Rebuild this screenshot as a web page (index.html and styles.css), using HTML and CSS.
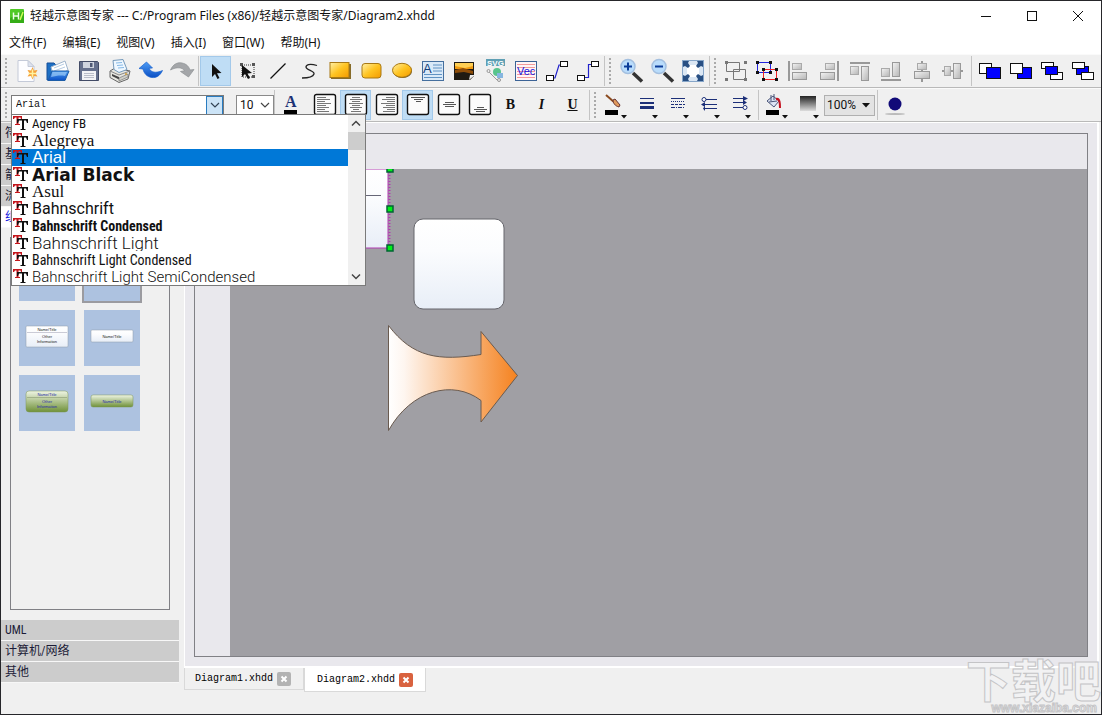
FILE: index.html
```html
<!DOCTYPE html>
<html lang="zh-CN">
<head>
<meta charset="utf-8">
<title>轻越示意图专家</title>
<link rel="stylesheet" href="styles.css">
</head>
<body>
<svg class="defs" aria-hidden="true">
  <defs>
    <linearGradient id="gold" x1="0" y1="0" x2="1" y2="1"><stop offset="0" stop-color="#fff0a8"/><stop offset=".5" stop-color="#ffc421"/><stop offset="1" stop-color="#f39a00"/></linearGradient>
    <linearGradient id="grey" x1="0" y1="0" x2="1" y2="1"><stop offset="0" stop-color="#f4f4f4"/><stop offset="1" stop-color="#b5b5b5"/></linearGradient>
    <linearGradient id="blue" x1="0" y1="0" x2="0" y2="1"><stop offset="0" stop-color="#4d9cf5"/><stop offset="1" stop-color="#0b4fc4"/></linearGradient>
    <linearGradient id="ice" x1="0" y1="0" x2="0" y2="1"><stop offset="0" stop-color="#fff"/><stop offset=".35" stop-color="#fbfcfe"/><stop offset="1" stop-color="#e8eef7"/></linearGradient>
    <linearGradient id="dark" x1="0" y1="0" x2="0" y2="1"><stop offset="0" stop-color="#222"/><stop offset="1" stop-color="#ddd"/></linearGradient>
    <linearGradient id="green" x1="0" y1="0" x2="0" y2="1"><stop offset="0" stop-color="#eff5e4"/><stop offset="1" stop-color="#6f9138"/></linearGradient>
    <linearGradient id="orange"><stop offset="0" stop-color="#fff"/><stop offset=".12" stop-color="#fef6f0"/><stop offset="1" stop-color="#f5821f"/></linearGradient>
    <symbol id="tt" viewBox="0 0 16 16"><path d="M1 1h9v3H9L8.500 2.500H6.500V9H8v1H3V9h1.500V2.500H3L2 4H1z" fill="#c4161c"/><path d="M5 4h11v4h-1l-1-2.500h-2V14h1.500v1H8.500v-1H10V5.500H7L6 8H5z" fill="#111"/></symbol>
    <symbol id="frame" viewBox="0 0 24 24"><rect x="1.500" y="1.500" width="21" height="20" rx="2" fill="#fbfbfb" stroke="#111" stroke-width="1.400"/></symbol>
    <symbol id="drop" viewBox="0 0 6 4"><path d="M0 0h6L3 3.500z" fill="#111"/></symbol>
    <symbol id="close" viewBox="0 0 14 14"><path d="M4.500 4.500l5 5m0-5l-5 5" stroke="#fff" stroke-width="2"/></symbol>
  </defs>
</svg>
<div class="window">
  <header class="titlebar">
    <svg class="logo" viewBox="0 0 14 14"><rect width="14" height="14" rx="1" fill="#4fc926"/><path d="M0 9L14 2V14H0z" fill="#35ad17"/><path d="M3.500 3.500v7M3.500 7h5M8.500 3.500v7" stroke="#efffe8" stroke-width="1.500"/><path d="M10 11l3-8" stroke="#cf5" stroke-width="1.500"/></svg>
    <h1 class="title">轻越示意图专家 --- C:/Program Files (x86)/轻越示意图专家/Diagram2.xhdd</h1>
    <div class="winbtns">
      <button aria-label="最小化"><svg viewBox="0 0 12 12"><path d="M1 6.500h10"/></svg></button>
      <button aria-label="最大化"><svg viewBox="0 0 12 12"><rect x="1.500" y="1.500" width="9" height="9"/></svg></button>
      <button aria-label="关闭"><svg viewBox="0 0 12 12"><path d="M1 1l10 10M11 1L1 11"/></svg></button>
    </div>
  </header>
  <nav class="menubar">
    <button>文件(F)</button><button>编辑(E)</button><button>视图(V)</button><button>插入(I)</button><button>窗口(W)</button><button>帮助(H)</button>
  </nav>

  <div class="toolbar" role="toolbar" aria-label="工具">
    <span class="grip"></span>
    <button class="tool" aria-label="新建"><svg viewBox="0 0 24 24"><path d="M3 1.500h10l6 6V22.500H3z" fill="#fdfdff" stroke="#c4cad8"/><path d="M13 1.500V7.500h6z" fill="#dde2ee" stroke="#c4cad8"/><path d="M17.500 8l1.500 3.500 3.500-.5-2 3.500 2 3-3.500-.5-1.500 3.500-1.500-3.500-3.500.5 2-3-2-3.500 3.500.5z" fill="#f5a13a"/><path d="M17.500 10.500v8M13.500 14.500h8" stroke="#fff3a0" stroke-width="1.500"/></svg></button>
    <button class="tool" aria-label="打开"><svg viewBox="0 0 24 24"><path d="M1 4h7l2 2h9v15H1z" fill="#1d6fc4" stroke="#164f98"/><path d="M5 8l14-6 3 9-14 8z" fill="#fff" stroke="#9fb4cc"/><path d="M8 9l10-4M8 12l11-4" stroke="#b6cbe2"/><path d="M2 21.500L6 12h17l-4 9.500z" fill="url(#blue)" stroke="#1c5da8"/><path d="M6.500 13H21l-2 4c-5-1-9 0-14 1z" fill="#9ccbf5" opacity=".7"/></svg></button>
    <button class="tool" aria-label="保存"><svg viewBox="0 0 24 24"><path d="M2.500 2.500h18l1 1v18h-19z" fill="#65708d" stroke="#424b66"/><rect x="6" y="3" width="11" height="6" fill="#cfd4df"/><rect x="13" y="4" width="2.500" height="4" fill="#4f5975"/><rect x="5" y="12" width="14" height="9" fill="#f2f3f6"/><path d="M7 14.500h10M7 16.500h10M7 18.500h10" stroke="#b9bdc9"/></svg></button>
    <button class="tool" aria-label="打印"><svg viewBox="0 0 24 24"><path d="M2 12l5-3 15 3-2 8-9 3.500-9-5z" fill="#e6e6e0" stroke="#666"/><path d="M2 12l9 4 11-4" fill="none" stroke="#888"/><path d="M5 1.500l10-1 4 10-8 3-5-3z" fill="#eef7ff" stroke="#7599bb"/><path d="M8 4l6-.5M9 6.500l6-.5M10 9l6-.5" stroke="#86b9e6"/><path d="M4 15v2l7 3.500v-2.500z" fill="#444"/><path d="M11 19l9-4v3l-9 4z" fill="#cfcfc8" stroke="#777" stroke-width=".7"/><circle cx="18" cy="15" r="1" fill="#c93"/></svg></button>
    <button class="tool" aria-label="撤销"><svg viewBox="0 0 24 24"><path d="M0 9.500L7.500 3l6 6-3.500.3c2 4.200 7 5.200 13.500 2.200C21 17 17 19 13 18.500 8 18 5 14.500 4 10z" fill="url(#blue)" stroke="#1660cf" stroke-width=".7"/></svg></button>
    <button class="tool" aria-label="重做"><svg viewBox="0 0 24 24"><path d="M24 10.500L18.500 18l-8-5.500 4-.8C12.500 8.500 7 7.500.5 11 3 5.500 7 3 12 4c5 1 7 4 8 7z" fill="#a4a6a9" stroke="#8d9093" stroke-width=".7"/></svg></button>
    <span class="sep"></span>
    <button class="tool on" aria-label="选择"><svg viewBox="0 0 24 24"><path d="M8 5v13l3-3 2.500 5 2-1-2.500-4.800 4.500-.2z" fill="#111"/></svg></button>
    <button class="tool" aria-label="编辑点"><svg viewBox="0 0 24 24"><path d="M7 6h12v12H7z" fill="none" stroke="#333" stroke-dasharray="1 1"/><path d="M5 4h3v3H5zM17 4h3v3h-3zM17 16h3v3h-3z" fill="#555"/><path d="M7 6v12l3-3 3 5 2-1-2.500-4.500 4.500-.5z" fill="#111"/></svg></button>
    <button class="tool" aria-label="直线"><svg viewBox="0 0 24 24"><path d="M4.500 19.500l15-15" stroke="#111" stroke-width="1.200"/></svg></button>
    <button class="tool" aria-label="曲线"><svg viewBox="0 0 24 24"><path d="M20 6.500C12 4 9 6 9 8c0 3 9 4 8 7s-7 4-12 4" fill="none" stroke="#222" stroke-width="1.300"/></svg></button>
    <button class="tool" aria-label="矩形"><svg viewBox="0 0 24 24"><path d="M3 5h20v15H3z" fill="#876c2a"/><rect x="2" y="3.500" width="19" height="15" fill="url(#gold)" stroke="#a87814"/></svg></button>
    <button class="tool" aria-label="圆角矩形"><svg viewBox="0 0 24 24"><rect x="3" y="4.500" width="19" height="14.500" rx="3" fill="url(#gold)" stroke="#a87814"/></svg></button>
    <button class="tool" aria-label="椭圆"><svg viewBox="0 0 24 24"><ellipse cx="12.500" cy="12" rx="9.500" ry="7" fill="#665326"/><ellipse cx="12" cy="11.300" rx="9.500" ry="7" fill="url(#gold)" stroke="#a87814"/></svg></button>
    <button class="tool" aria-label="文本"><svg viewBox="0 0 24 24"><rect x="1.500" y="2.500" width="21" height="19" fill="#d9e9f8" stroke="#456f9e"/><path d="M12 6h9M12 9h9M12 12h9M3 15.500h18M3 18.500h18" stroke="#5f92c3"/><text class="glyph-a" x="2" y="14">A</text></svg></button>
    <button class="tool" aria-label="图片"><svg viewBox="0 0 24 24"><path d="M2 3h20v14l-4 4H2z" fill="#1f1a12"/><path d="M3 4h18v6H3z" fill="#f09a12"/><path d="M3 4h18v3l-8 2-10-2z" fill="#ffcf54"/><path d="M3 11l8-2 10 3v3l-9-2-9 1z" fill="#8e4d08"/><path d="M17 21l1-5 5 0z" fill="#eee"/></svg></button>
    <button class="tool" aria-label="SVG"><svg viewBox="0 0 24 24"><rect x="3" y="0" width="19" height="7" fill="#5f9fb4"/><text class="glyph-svg" x="4" y="6.500">SVG</text><circle cx="14" cy="13" r="4" fill="#58c48c"/><rect x="14" y="14" width="6" height="5" fill="#86b6e0"/><path d="M5 12l9 9 4 0" fill="none" stroke="#999"/><circle cx="5.500" cy="12" r="1.500" fill="#eee" stroke="#999"/><circle cx="16" cy="21" r="1.500" fill="#eee" stroke="#999"/></svg></button>
    <button class="tool" aria-label="矢量"><svg viewBox="0 0 24 24"><rect x="1.500" y="2.500" width="21" height="19" fill="#fff5f5" stroke="#3c6396"/><path d="M3 5.500h18M3 8.500h18M3 12.500h18M3 15.500h18M3 18.500h18" stroke="#f29a9a"/><text class="glyph-vec" x="3" y="16">Vec</text></svg></button>
    <button class="tool" aria-label="连线"><svg viewBox="0 0 24 24"><path d="M9 19h1l4-13h2" fill="none" stroke="#22c" stroke-width="1.200"/><rect x="1.500" y="16.500" width="7" height="5" fill="#fff" stroke="#111"/><rect x="15.500" y="2.500" width="7" height="5" fill="#fff" stroke="#111"/></svg></button>
    <button class="tool" aria-label="折线"><svg viewBox="0 0 24 24"><path d="M8 18.500h4.500v-13H16" fill="none" stroke="#22c" stroke-width="1.200"/><rect x="1.500" y="16.500" width="7" height="5" fill="#fff" stroke="#111"/><rect x="15.500" y="2.500" width="7" height="5" fill="#fff" stroke="#111"/></svg></button>
    <span class="sep"></span><span class="grip"></span>
    <button class="tool" aria-label="放大"><svg viewBox="0 0 24 24"><path d="M14 14l9 8.500" stroke="#333" stroke-width="3.500"/><circle cx="9" cy="7.500" r="7" fill="#b9dcfb" stroke="#a3bfdf" stroke-width="1.500"/><path d="M5 7.500h8M9 3.500v8" stroke="#0b3c99" stroke-width="2"/></svg></button>
    <button class="tool" aria-label="缩小"><svg viewBox="0 0 24 24"><path d="M14 14l9 8.500" stroke="#333" stroke-width="3.500"/><circle cx="9" cy="7.500" r="7" fill="#b9dcfb" stroke="#a3bfdf" stroke-width="1.500"/><path d="M5 7.500h8" stroke="#0b3c99" stroke-width="2"/></svg></button>
    <button class="tool" aria-label="适应窗口"><svg viewBox="0 0 24 24"><rect x="1" y="1" width="22" height="22" fill="#86a5c8"/><rect x="2" y="2" width="20" height="20" fill="#dbe7f4"/><rect x="6" y="6" width="12" height="12" rx="3" fill="#fff"/><path d="M2 2h6L7 4l2 3-2 2-3-2-2 1zM22 2h-6l1 2-2 3 2 2 3-2 2 1zM2 22h6l-1-2 2-3-2-2-3 2-2-1zM22 22h-6l1-2-2-3 2-2 3 2 2-1z" fill="#284f83"/></svg></button>
    <span class="sep"></span><span class="grip"></span>
    <button class="tool" aria-label="组合"><svg viewBox="0 0 24 24"><path d="M2.500 3.500h13v9h-13zM9.500 10.500h12v10h-12z" fill="none" stroke="#777"/><path d="M1 2h3v3H1zM20 2h3v3h-3zM1 19h3v3H1zM20 19h3v3h-3z" fill="#777"/></svg></button>
    <button class="tool" aria-label="取消组合"><svg viewBox="0 0 24 24"><path d="M2.500 3.500h13v10h-13z" fill="none" stroke="#22d"/><path d="M8.500 10.500h13v10h-13z" fill="none" stroke="#e22"/><path d="M1 2h3v3H1zM14 2h3v3h-3zM1 12h3v3H1zM14 12h3v3h-3zM7 9h3v3H7zM20 9h3v3h-3zM7 19h3v3H7zM20 19h3v3h-3z" fill="#111"/></svg></button>
    <button class="tool" aria-label="左对齐"><svg viewBox="0 0 24 24"><path d="M3 2v20" stroke="#999" stroke-width="2"/><rect x="6.500" y="4.500" width="9" height="6" fill="url(#grey)" stroke="#aaa"/><rect x="6.500" y="13.500" width="14" height="7" fill="url(#grey)" stroke="#999"/></svg></button>
    <button class="tool" aria-label="右对齐"><svg viewBox="0 0 24 24"><path d="M21 2v20" stroke="#999" stroke-width="2"/><rect x="8.500" y="4.500" width="9" height="6" fill="url(#grey)" stroke="#aaa"/><rect x="3.500" y="13.500" width="14" height="7" fill="url(#grey)" stroke="#999"/></svg></button>
    <button class="tool" aria-label="顶端对齐"><svg viewBox="0 0 24 24"><path d="M2 4h20" stroke="#999" stroke-width="2"/><rect x="2.500" y="7.500" width="8" height="8" fill="url(#grey)" stroke="#aaa"/><rect x="13.500" y="7.500" width="7" height="14" fill="url(#grey)" stroke="#999"/></svg></button>
    <button class="tool" aria-label="底端对齐"><svg viewBox="0 0 24 24"><path d="M2 21h20" stroke="#999" stroke-width="2"/><rect x="2.500" y="9.500" width="8" height="8" fill="url(#grey)" stroke="#aaa"/><rect x="13.500" y="3.500" width="7" height="14" fill="url(#grey)" stroke="#999"/></svg></button>
    <button class="tool" aria-label="水平居中"><svg viewBox="0 0 24 24"><path d="M12 2v21" stroke="#999" stroke-width="2"/><rect x="7.500" y="4.500" width="9" height="6" fill="url(#grey)" stroke="#aaa"/><rect x="4.500" y="12.500" width="15" height="7" fill="url(#grey)" stroke="#999"/></svg></button>
    <button class="tool" aria-label="垂直居中"><svg viewBox="0 0 24 24"><path d="M1 12h21" stroke="#999" stroke-width="2"/><rect x="3.500" y="7.500" width="6" height="9" fill="url(#grey)" stroke="#aaa"/><rect x="12.500" y="4.500" width="7" height="15" fill="url(#grey)" stroke="#999"/></svg></button>
    <span class="sep wide"></span>
    <button class="tool" aria-label="置于顶层"><svg viewBox="0 0 24 24"><rect x="1.500" y="4.500" width="12" height="10" fill="#fff" stroke="#111"/><rect x="8.500" y="8.500" width="14" height="11" fill="#00f" stroke="#111"/></svg></button>
    <button class="tool" aria-label="置于底层"><svg viewBox="0 0 24 24"><rect x="8.500" y="8.500" width="14" height="11" fill="#00f" stroke="#111"/><rect x="1.500" y="4.500" width="12" height="10" fill="#fff" stroke="#111"/></svg></button>
    <button class="tool" aria-label="上移一层"><svg viewBox="0 0 24 24"><rect x="1.500" y="3.500" width="12" height="6" fill="#fff" stroke="#111"/><rect x="10.500" y="13.500" width="12" height="7" fill="#fff" stroke="#111"/><rect x="5.500" y="7.500" width="12" height="8" fill="#00f" stroke="#111"/></svg></button>
    <button class="tool" aria-label="下移一层"><svg viewBox="0 0 24 24"><rect x="5.500" y="7.500" width="12" height="8" fill="#00f" stroke="#111"/><rect x="1.500" y="3.500" width="12" height="6" fill="#fff" stroke="#111"/><rect x="10.500" y="13.500" width="12" height="7" fill="#fff" stroke="#111"/></svg></button>
  </div>

  <div class="toolbar" role="toolbar" aria-label="格式">
    <span class="grip"></span>
    <div class="combo">
      <input class="font-input" type="text" value="Arial" aria-label="字体">
      <button class="combo-open" aria-label="打开字体列表"><svg viewBox="0 0 10 10"><path d="M1 3l4 4 4-4" fill="none" stroke="#345" stroke-width="1.200"/></svg></button>
      <div class="popup">
        <ul class="fonts" role="listbox" aria-label="字体列表">
          <li class="agency" role="option"><svg><use href="#tt"/></svg>Agency FB</li>
          <li class="serif" role="option"><svg><use href="#tt"/></svg>Alegreya</li>
          <li class="arial picked" role="option" aria-selected="true"><svg><use href="#tt"/></svg>Arial</li>
          <li class="black" role="option"><svg><use href="#tt"/></svg>Arial Black</li>
          <li class="serif" role="option"><svg><use href="#tt"/></svg>Asul</li>
          <li class="din" role="option"><svg><use href="#tt"/></svg>Bahnschrift</li>
          <li class="narrow strong" role="option"><svg><use href="#tt"/></svg>Bahnschrift Condensed</li>
          <li class="din light" role="option"><svg><use href="#tt"/></svg>Bahnschrift Light</li>
          <li class="narrow" role="option"><svg><use href="#tt"/></svg>Bahnschrift Light Condensed</li>
          <li class="din semi" role="option"><svg><use href="#tt"/></svg>Bahnschrift Light SemiCondensed</li>
        </ul>
        <div class="scroll" aria-hidden="true">
          <svg viewBox="0 0 10 10"><path d="M1 7l4-4 4 4"/></svg><span class="thumb"></span><svg viewBox="0 0 10 10"><path d="M1 3l4 4 4-4"/></svg>
        </div>
      </div>
    </div>
    <div class="select size"><select aria-label="字号"><option>10</option></select><svg viewBox="0 0 10 10"><path d="M1 3l4 4 4-4" fill="none" stroke="#444" stroke-width="1.200"/></svg></div>
    <span class="sep tight"></span>
    <button class="tool" aria-label="字体颜色"><svg viewBox="0 0 24 24"><text class="glyph-color" x="6" y="14">A</text><rect x="5" y="17" width="13" height="5" fill="#000"/></svg></button>
    <span class="gap"></span>
    <button class="tool" aria-label="文本左对齐"><svg viewBox="0 0 24 24"><use href="#frame"/><path d="M4 4.500h9M4 6.500h13M4 8.500h8M4 10.500h14M4 12.500h9M4 14.500h12M4 16.500h8M4 18.500h12" stroke="#777"/></svg></button>
    <button class="tool on" aria-label="文本居中"><svg viewBox="0 0 24 24"><use href="#frame"/><path d="M8 4.500h8M6 6.500h12M8 8.500h8M5 10.500h14M8 12.500h8M6 14.500h12M9 16.500h6M7 18.500h10" stroke="#777"/></svg></button>
    <button class="tool" aria-label="文本右对齐"><svg viewBox="0 0 24 24"><use href="#frame"/><path d="M11 4.500h9M7 6.500h13M12 8.500h8M6 10.500h14M11 12.500h9M8 14.500h12M12 16.500h8M8 18.500h12" stroke="#777"/></svg></button>
    <button class="tool on" aria-label="文本靠上"><svg viewBox="0 0 24 24"><use href="#frame"/><path d="M5 4.500h14M8 6.500h9M10 8.500h5" stroke="#555"/></svg></button>
    <button class="tool" aria-label="文本居中垂直"><svg viewBox="0 0 24 24"><use href="#frame"/><path d="M8 9.500h9M6 11.500h13M8 13.500h9" stroke="#555"/></svg></button>
    <button class="tool" aria-label="文本靠下"><svg viewBox="0 0 24 24"><use href="#frame"/><path d="M9 14.500h7M6 16.500h13M8 18.500h9" stroke="#555"/></svg></button>
    <button class="tool letter">B</button>
    <button class="tool letter ital">I</button>
    <button class="tool letter under">U</button>
    <span class="sep"></span><span class="grip"></span>
    <button class="tool" aria-label="线条颜色"><svg viewBox="0 0 24 24"><path d="M2 2l8 7" stroke="#8b4a1e" stroke-width="2"/><path d="M9 7l2-1 5 6-1 2c-4-1-6-4-6-7z" fill="#e09a5c" stroke="#633"/><rect x="1" y="17" width="13" height="5" fill="#000"/></svg><svg class="drop"><use href="#drop"/></svg></button>
    <button class="tool" aria-label="线宽"><svg viewBox="0 0 24 24"><path d="M5 5.500h14" stroke="#1c2f78"/><path d="M5 10h14" stroke="#1c2f78" stroke-width="2"/><path d="M5 14.500h14" stroke="#1c2f78" stroke-width="3"/></svg><svg class="drop"><use href="#drop"/></svg></button>
    <button class="tool" aria-label="线型"><svg viewBox="0 0 24 24"><path d="M5 5.500h14" stroke="#1c2f78"/><path d="M5 8.500h14" stroke="#1c2f78" stroke-dasharray="1 1"/><path d="M5 11.500h14" stroke="#1c2f78" stroke-dasharray="3 1"/><path d="M5 14.500h14" stroke="#1c2f78" stroke-dasharray="4 1 1 1"/></svg><svg class="drop"><use href="#drop"/></svg></button>
    <button class="tool" aria-label="起点样式"><svg viewBox="0 0 24 24"><path d="M8 6.500h12M5 11.500h15M8 15.500h12" stroke="#1c2f78"/><circle cx="7" cy="6.500" r="2" fill="#fff" stroke="#1c2f78"/><path d="M8 9v5l-4-2.500z" fill="#1c2f78"/><path d="M8 13v5l-2-2.500z" fill="#1c2f78"/></svg><svg class="drop"><use href="#drop"/></svg></button>
    <button class="tool" aria-label="终点样式"><svg viewBox="0 0 24 24"><path d="M5 5.500h12M5 9.500h12M5 14.500h11" stroke="#1c2f78"/><path d="M15 3v5l5-2.500zM15 7v5l4-2.500z" fill="#1c2f78"/><circle cx="17" cy="14.500" r="2" fill="#fff" stroke="#1c2f78"/></svg><svg class="drop"><use href="#drop"/></svg></button>
    <span class="sep wide"></span>
    <button class="tool" aria-label="填充颜色"><svg viewBox="0 0 24 24"><path d="M2 8l6-5 6 5-5 6z" fill="#dde4f3" stroke="#4a5579"/><path d="M4 9l8-1M6 2v6M9 1v6" stroke="#4a5579"/><path d="M11 6c4-1 4 5 4 9" fill="none" stroke="#c4121f" stroke-width="2"/><rect x="1" y="17" width="13" height="5" fill="#000"/></svg><svg class="drop"><use href="#drop"/></svg></button>
    <button class="tool" aria-label="渐变"><svg viewBox="0 0 24 24"><rect x="4" y="3" width="16" height="15" fill="url(#dark)"/></svg><svg class="drop"><use href="#drop"/></svg></button>
    <div class="select zoom"><select aria-label="缩放"><option>100%</option></select><svg viewBox="0 0 10 10"><path d="M1 3h8L5 7.500z" fill="#111"/></svg></div>
    <span class="sep"></span>
    <button class="tool" aria-label="阴影"><svg viewBox="0 0 24 24"><circle cx="12" cy="11" r="6.500" fill="#110a78"/><ellipse cx="12" cy="21" rx="10" ry="1" fill="#bbb"/></svg></button>
  </div>

  <div class="body">
    <aside class="side">
      <button class="section">符号</button>
      <button class="section">基本图形</button>
      <button class="section">箭头</button>
      <button class="section">流程图</button>
      <button class="section active">组织结构图</button>
      <div class="palette">
        <button class="shape" aria-label="形状"></button>
        <button class="shape selected" aria-label="形状"></button>
        <button class="shape" aria-label="标题与信息"><svg viewBox="0 0 56 56"><rect x="7" y="16" width="42" height="21" rx="1" fill="url(#ice)" stroke="#8c9aa8" stroke-width=".5"/><path d="M8 22.500h40" stroke="#aab" stroke-width=".6"/><text x="28" y="20.500">Name/Title</text><text x="28" y="28">Other</text><text x="28" y="33">Information</text></svg></button>
        <button class="shape" aria-label="标题"><svg viewBox="0 0 56 56"><rect x="7" y="20" width="42" height="12" rx="1" fill="url(#ice)" stroke="#8c9aa8" stroke-width=".5"/><text x="28" y="27.500">Name/Title</text></svg></button>
        <button class="shape ink" aria-label="绿色标题与信息"><svg viewBox="0 0 56 56"><rect x="7" y="16" width="42" height="21" rx="3" fill="url(#green)" stroke="#7c9658" stroke-width=".5"/><path d="M8 22.500h40" stroke="#8a9a70" stroke-width=".6"/><text x="28" y="20.500">Name/Title</text><text x="28" y="28">Other</text><text x="28" y="33">Information</text></svg></button>
        <button class="shape ink" aria-label="绿色标题"><svg viewBox="0 0 56 56"><rect x="7" y="20" width="42" height="12" rx="2" fill="url(#green)" stroke="#7c9658" stroke-width=".5"/><text x="28" y="27.500">Name/Title</text></svg></button>
      </div>
      <button class="section">UML</button>
      <button class="section">计算机/网络</button>
      <button class="section">其他</button>
    </aside>
    <main class="main">
      <div class="board">
        <div class="view">
          <svg class="canvas" aria-label="示意图">
            <rect x="80" y="0" width="78" height="79" fill="url(#ice)" stroke="#b03ab0"/>
            <path d="M88 26.500h63" stroke="#667"/>
            <path d="M159.500 0v79" stroke="#b03ab0" stroke-width="2" stroke-dasharray="1 2"/>
            <g fill="#00f018" stroke="#063" stroke-width="1.500"><rect x="157" y="-3" width="6" height="6"/><rect x="157" y="37" width="6" height="6"/><rect x="157" y="76" width="6" height="6"/></g>
            <rect x="184" y="50" width="90" height="90" rx="9" fill="url(#ice)" stroke="#66666c"/>
            <path d="M158.500 156.500C183 189 209 192 251 185.500V162.500L287.500 206.500 251 253V231.500C223 210 181 221 158.500 261.500z" fill="url(#orange)" stroke="#6a5b50"/>
          </svg>
        </div>
      </div>
      <div class="tabs">
        <div class="tab"><button class="tab-name">Diagram1.xhdd</button><button class="tab-close" aria-label="关闭 Diagram1"><svg><use href="#close"/></svg></button></div>
        <div class="tab current"><button class="tab-name">Diagram2.xhdd</button><button class="tab-close" aria-label="关闭 Diagram2"><svg><use href="#close"/></svg></button></div>
      </div>
    </main>
  </div>
  <div class="watermark"><span class="mark">下载吧</span><span class="site">www.xiazaiba.com</span></div>
</div>
</body>
</html>
```

FILE: styles.css
```css
* { box-sizing: border-box; }
body { margin: 0; font: 12px/16px "Noto Sans", "Noto Sans CJK SC", sans-serif; color: #111; }
button, input, select { font: inherit; color: inherit; margin: 0; padding: 0; border: 0; background: none; border-radius: 0; }
svg { display: block; }
.defs { position: absolute; width: 0; height: 0; }
.window { position: relative; display: flex; flex-direction: column; height: 100vh; border: 1px solid #26262a; background: #f0f0f0; overflow: hidden; }

.titlebar { display: flex; align-items: center; flex: none; height: 30px; padding-left: 9px; background: #fff; }
.logo { width: 14px; height: 14px; margin-right: 6px; }
.title { flex: 1; margin: 0; font-size: 12px; font-weight: 400; white-space: nowrap; }
.winbtns { display: flex; }
.winbtns button { display: grid; place-items: center; width: 46px; height: 29px; }
.winbtns svg { width: 12px; height: 12px; fill: none; stroke: #111; }
.menubar { display: flex; flex: none; gap: 16px; height: 23px; padding-left: 8px; background: #fff; }

.toolbar { display: flex; align-items: center; flex: none; height: 34px; border-bottom: 1px solid #b9b9b9; border-top: 1px solid #fafafa; }
.tool { position: relative; display: grid; place-items: center; flex: none; width: 31px; height: 30px; }
.tool > svg { width: 24px; height: 24px; overflow: visible; }
.tool > .drop { position: absolute; right: 4px; bottom: 1px; width: 6px; height: 4px; }
.on { background: #bfddf5; border: 1px solid #a3c9ea; }
.grip { flex: none; width: 4px; height: 27px; margin: 0 2px 0 3px; background: radial-gradient(circle at 1px 1px, #aaa 1px, transparent 1px) 0 0 / 4px 4px; }
.grip:first-child { margin-left: 4px; }
.sep { flex: none; width: 1px; height: 30px; margin: 0 1px; background: #c4c4c4; }
.wide { margin: 0 2px 0 3px; }
.tight { margin: 0; }
.gap { flex: none; width: 3px; }
.letter { font: 700 14px/30px "Liberation Serif", serif; }
.ital { font-style: italic; }
.under { text-decoration: underline; }
.glyph-a { font: 13px "Liberation Sans", sans-serif; fill: #123f7a; }
.glyph-svg { font: 700 8px "Liberation Sans", sans-serif; fill: #fff; }
.glyph-vec { font: 11px "Liberation Sans", sans-serif; fill: #1414dd; }
.glyph-color { font: 700 16px "Liberation Serif", serif; fill: #1d3276; }

.combo { position: relative; display: flex; flex: none; width: 213px; height: 21px; border: 1px solid #7a7a7a; background: #fff; }
.font-input { flex: 1; min-width: 0; padding-left: 4px; font: 10px/18px "Liberation Mono", monospace; outline: 0; }
.combo-open { display: grid; place-items: center; width: 17px; background: #cce4f7; border: 1px solid #2a7cc0; }
.combo-open svg { width: 10px; height: 10px; }
.popup { position: absolute; z-index: 5; left: -1px; top: 18px; display: flex; width: 355px; height: 172px; border: 1px solid #7a7a7a; background: #fff; }
.fonts { flex: 1; margin: 0; padding: 0; list-style: none; }
.fonts li { display: flex; gap: 4px; height: 17px; overflow: hidden; font-size: 16px; line-height: 18px; white-space: nowrap; }
.fonts svg { flex: none; width: 16px; height: 16px; }
.fonts .agency, .fonts .narrow { font-family: "Roboto Condensed", "Liberation Sans", sans-serif; font-size: 14px; }
.fonts .agency { font-size: 13px; }
.fonts .strong { font-weight: 700; }
.fonts .serif { font-family: "Liberation Serif", serif; font-size: 17px; }
.fonts .arial { font-family: "Liberation Sans", sans-serif; font-size: 17px; }
.fonts .black { font-family: "DejaVu Sans", sans-serif; font-weight: 700; font-size: 17px; }
.fonts .din { font-family: Roboto, sans-serif; }
.fonts .light { font-size: 17px; font-weight: 300; }
.fonts .semi { font-size: 15px; font-weight: 300; }
.fonts .picked { background: #0078d7; color: #fff; }
.scroll { display: flex; flex-direction: column; width: 17px; background: #f0f0f0; }
.scroll svg { width: 10px; height: 17px; margin: 0 3px; fill: none; stroke: #444; stroke-width: 1.5; }
.scroll .thumb { height: 18px; margin-bottom: auto; background: #cdcdcd; }
.select { display: flex; align-items: center; flex: none; height: 21px; border: 1px solid #8a8a8a; background: #fff; }
.select select { flex: 1; min-width: 0; height: 100%; appearance: none; outline: 0; font-family: Roboto, sans-serif; }
.select svg { flex: none; width: 10px; height: 10px; margin-right: 3px; pointer-events: none; }
.size { width: 38px; margin-left: 12px; padding-left: 3px; }
.zoom { width: 51px; margin: 0 1px 0 1px; padding-left: 2px; background: #e3e3e3; border-color: #b0b0b0; }

.body { display: flex; flex: 1; min-height: 0; }
.side { display: flex; flex-direction: column; flex: none; width: 178px; margin-right: 5px; padding: 1px 0 31px; }
.section { flex: none; height: 21px; padding-left: 4px; text-align: left; background: #ccc; border-bottom: 1px solid #f7f7f7; color: #1c1c38; font: 12px/20px "Roboto Condensed", "Noto Sans CJK SC", sans-serif; }
.active { background: #fff; color: #1414dd; }
.palette { flex: 1; min-height: 0; display: grid; grid-template-columns: 56px 56px; grid-auto-rows: 56px; gap: 9px; align-content: start; margin: 9px 9px 10px; padding: 7px 8px; border: 1px solid #808085; overflow: hidden; }
.shape { background: #adc2e0; }
.selected { outline: 2px solid #9b9ba0; }
.shape text { font: 4px "Liberation Sans", sans-serif; text-anchor: middle; fill: #222; }
.ink text { fill: #2a2aa8; }

.main { display: flex; flex-direction: column; flex: 1; min-width: 0; }
.board { flex: 1; min-height: 0; display: flex; padding: 10px 9px 9px; background: #e9e8ed; border: 1px solid #fff; border-width: 1px 2px 2px 1px; margin-right: 2px; }
.view { flex: 1; display: flex; padding: 35px 0 0 35px; border: 1px solid #808085; min-width: 0; }
.canvas { flex: 1; min-width: 0; height: 100%; background: #a09fa4; overflow: hidden; }
.tabs { display: flex; align-items: flex-start; flex: none; height: 46px; }
.tab { display: flex; align-items: center; gap: 4px; height: 22px; padding: 0 12px 0 10px; border: 1px solid #d9d9d9; border-top: 0; }
.current { height: 24px; padding-left: 12px; background: #fff; }
.tab-name { font: 10px/16px "Liberation Mono", monospace; color: #000; }
.tab-close { width: 14px; height: 14px; border-radius: 2px; background: #b3b3b3; }
.tab-close svg { width: 14px; height: 14px; }
.current .tab-close { background: #d9623f; }

.watermark { position: absolute; right: 0; bottom: 0; display: flex; flex-direction: column; align-items: flex-end; color: #f2f2f3; -webkit-text-stroke: 1px #c4c4c6; pointer-events: none; }
.mark { font: 700 45px/46px "Noto Sans CJK SC", sans-serif; }
.site { padding-right: 4px; font: 700 12px/12px "Liberation Sans", sans-serif; }
```
